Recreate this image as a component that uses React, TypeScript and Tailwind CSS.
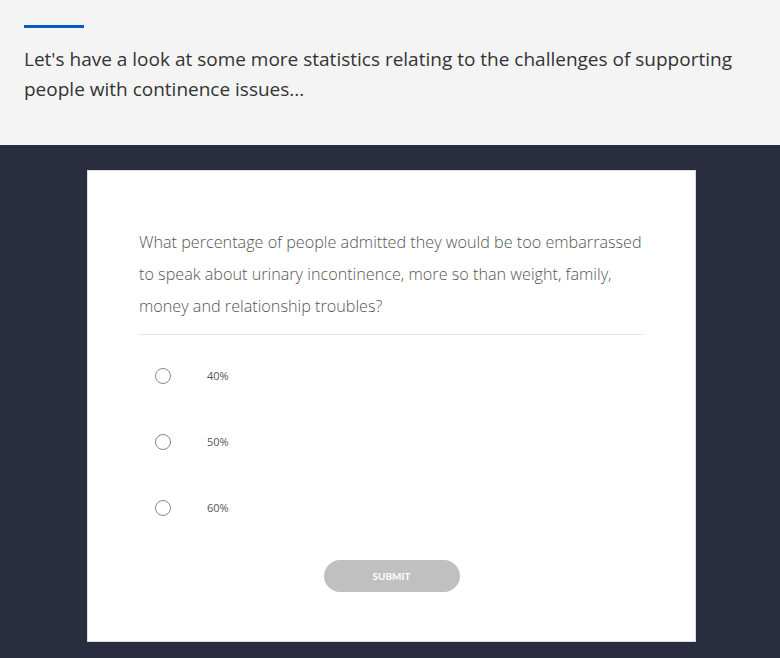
import React, { useState } from "react";

const OPTIONS = ["40%", "50%", "60%"];

const App: React.FC = () => {
  const [picked, setPicked] = useState<string | null>(null);

  return (
    <div className="min-h-[658px] bg-[#2a2d40] font-['Open_Sans',sans-serif]">
      <div className="h-[145px] bg-[#f4f4f4] px-6 pt-[25px]">
        <div className="h-[3px] w-[60px] bg-[#0a5cbf]" />
        <p className="mt-[16px] text-[19px] leading-[30px] text-[#333]">
          Let's have a look at some more statistics relating to the challenges of supporting people with
          continence issues...
        </p>
      </div>

      <div className="pt-[25px]">
        <div className="ml-[87px] w-[609px] border border-[#dcdcdc] bg-white px-[51px] pb-[49px] pt-[55px]">
          <p className="text-[16.2px] font-light leading-[32px] text-[#555]">
            What percentage of people admitted they would be too embarrassed to speak about urinary
            incontinence, more so than weight, family, money and relationship troubles?
          </p>
          <div className="mt-[12px] h-px bg-[#e6e6e6]" />

          <div className="mt-[33px] flex flex-col gap-[50px]">
            {OPTIONS.map((option) => (
              <label key={option} className="flex h-4 cursor-pointer items-center">
                <button
                  type="button"
                  onClick={() => setPicked(option)}
                  className="ml-[16px] flex h-4 w-4 items-center justify-center rounded-full border border-[#888] bg-white"
                >
                  {picked === option ? <span className="h-2 w-2 rounded-full bg-[#555]" /> : null}
                </button>
                <span className="ml-[36px] text-[11px] text-[#555]">{option}</span>
              </label>
            ))}
          </div>

          <div className="mt-[44px] flex justify-center">
            <button
              type="button"
              className="h-8 w-[136px] rounded-full bg-[#c0c0c0] font-['Lato',sans-serif] text-[10px] font-bold text-white"
            >
              SUBMIT
            </button>
          </div>
        </div>
      </div>
    </div>
  );
};

export default App;
